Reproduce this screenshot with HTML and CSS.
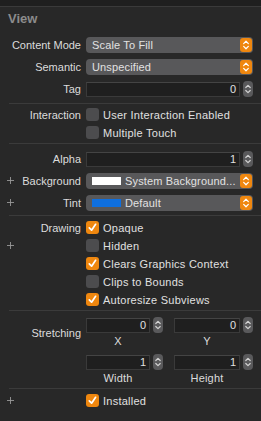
FILE: index.html
```html
<!DOCTYPE html>
<html lang="en">
<head>
  <meta charset="UTF-8">
  <title>Attributes Inspector</title>
  <meta name="viewport" content="width=device-width, initial-scale=1.0">
  <link rel="stylesheet" href="styles.css">
</head>
<body>
  <div class="top-strip"></div>
  <div class="inspector-title">View</div>

  <!-- Content -->
  <div class="section sec-content">
    <div class="row">
      <div class="label">Content Mode</div>
      <div class="popup"><span class="popup-text">Scale To Fill</span><span class="popup-arrow"><svg viewBox="0 0 12 15"><path d="M3.5 6 L6 3.5 L8.5 6 M3.5 9 L6 11.5 L8.5 9" stroke="#fff" stroke-width="1.3" fill="none" stroke-linecap="round" stroke-linejoin="round"/></svg></span></div>
    </div>
    <div class="row">
      <div class="label">Semantic</div>
      <div class="popup"><span class="popup-text">Unspecified</span><span class="popup-arrow"><svg viewBox="0 0 12 15"><path d="M3.5 6 L6 3.5 L8.5 6 M3.5 9 L6 11.5 L8.5 9" stroke="#fff" stroke-width="1.3" fill="none" stroke-linecap="round" stroke-linejoin="round"/></svg></span></div>
    </div>
    <div class="row">
      <div class="label">Tag</div>
      <div class="number-field">
        <div class="field">0</div>
        <div class="stepper"><svg viewBox="0 0 10 16"><path d="M2.8 6.5 L5 4.3 L7.2 6.5 M2.8 9.5 L5 11.7 L7.2 9.5" stroke="#d2d2d2" stroke-width="1.2" fill="none" stroke-linecap="round" stroke-linejoin="round"/></svg></div>
      </div>
    </div>
  </div>
  <div class="divider"></div>

  <!-- Interaction -->
  <div class="section sec-interaction">
    <div class="row check-row">
      <div class="label">Interaction</div>
      <label class="check"><span class="box"></span>User Interaction Enabled</label>
    </div>
    <div class="row check-row">
      <div class="label"></div>
      <label class="check"><span class="box"></span>Multiple Touch</label>
    </div>
  </div>
  <div class="divider"></div>

  <!-- Alpha / colors -->
  <div class="section sec-alpha">
    <div class="row">
      <div class="label">Alpha</div>
      <div class="number-field">
        <div class="field">1</div>
        <div class="stepper"><svg viewBox="0 0 10 16"><path d="M2.8 6.5 L5 4.3 L7.2 6.5 M2.8 9.5 L5 11.7 L7.2 9.5" stroke="#d2d2d2" stroke-width="1.2" fill="none" stroke-linecap="round" stroke-linejoin="round"/></svg></div>
      </div>
    </div>
    <div class="row">
      <div class="label"><span class="plus"><svg viewBox="0 0 8 8"><path d="M4 0 V8 M0 4 H8" stroke="#9a9a9a" stroke-width="1"/></svg></span>Background</div>
      <div class="popup"><span class="swatch swatch-white"></span><span class="popup-text">System Background...</span><span class="popup-arrow"><svg viewBox="0 0 12 15"><path d="M3.5 6 L6 3.5 L8.5 6 M3.5 9 L6 11.5 L8.5 9" stroke="#fff" stroke-width="1.3" fill="none" stroke-linecap="round" stroke-linejoin="round"/></svg></span></div>
    </div>
    <div class="row">
      <div class="label"><span class="plus"><svg viewBox="0 0 8 8"><path d="M4 0 V8 M0 4 H8" stroke="#9a9a9a" stroke-width="1"/></svg></span>Tint</div>
      <div class="popup"><span class="swatch swatch-blue"></span><span class="popup-text">Default</span><span class="popup-arrow"><svg viewBox="0 0 12 15"><path d="M3.5 6 L6 3.5 L8.5 6 M3.5 9 L6 11.5 L8.5 9" stroke="#fff" stroke-width="1.3" fill="none" stroke-linecap="round" stroke-linejoin="round"/></svg></span></div>
    </div>
  </div>
  <div class="divider"></div>

  <!-- Drawing -->
  <div class="section sec-drawing">
    <div class="row check-row">
      <div class="label">Drawing</div>
      <label class="check"><span class="box on"><svg viewBox="0 0 13 13"><path d="M3.3 6.8 L5.6 9.2 L9.6 3.3" stroke="#fff" stroke-width="1.7" fill="none" stroke-linecap="round" stroke-linejoin="round"/></svg></span>Opaque</label>
    </div>
    <div class="row check-row">
      <div class="label"><span class="plus"><svg viewBox="0 0 8 8"><path d="M4 0 V8 M0 4 H8" stroke="#9a9a9a" stroke-width="1"/></svg></span></div>
      <label class="check"><span class="box"></span>Hidden</label>
    </div>
    <div class="row check-row">
      <div class="label"></div>
      <label class="check"><span class="box on"><svg viewBox="0 0 13 13"><path d="M3.3 6.8 L5.6 9.2 L9.6 3.3" stroke="#fff" stroke-width="1.7" fill="none" stroke-linecap="round" stroke-linejoin="round"/></svg></span>Clears Graphics Context</label>
    </div>
    <div class="row check-row">
      <div class="label"></div>
      <label class="check"><span class="box"></span>Clips to Bounds</label>
    </div>
    <div class="row check-row">
      <div class="label"></div>
      <label class="check"><span class="box on"><svg viewBox="0 0 13 13"><path d="M3.3 6.8 L5.6 9.2 L9.6 3.3" stroke="#fff" stroke-width="1.7" fill="none" stroke-linecap="round" stroke-linejoin="round"/></svg></span>Autoresize Subviews</label>
    </div>
  </div>
  <div class="divider"></div>

  <!-- Stretching -->
  <div class="section sec-stretch">
    <div class="row stretch-row">
      <div class="label">Stretching</div>
      <div class="pair">
        <div class="cell">
          <div class="number-field">
            <div class="field">0</div>
            <div class="stepper"><svg viewBox="0 0 10 16"><path d="M2.8 6.5 L5 4.3 L7.2 6.5 M2.8 9.5 L5 11.7 L7.2 9.5" stroke="#d2d2d2" stroke-width="1.2" fill="none" stroke-linecap="round" stroke-linejoin="round"/></svg></div>
          </div>
          <div class="caption">X</div>
        </div>
        <div class="cell">
          <div class="number-field">
            <div class="field">0</div>
            <div class="stepper"><svg viewBox="0 0 10 16"><path d="M2.8 6.5 L5 4.3 L7.2 6.5 M2.8 9.5 L5 11.7 L7.2 9.5" stroke="#d2d2d2" stroke-width="1.2" fill="none" stroke-linecap="round" stroke-linejoin="round"/></svg></div>
          </div>
          <div class="caption">Y</div>
        </div>
      </div>
    </div>
    <div class="row stretch-row">
      <div class="label"></div>
      <div class="pair">
        <div class="cell">
          <div class="number-field">
            <div class="field">1</div>
            <div class="stepper"><svg viewBox="0 0 10 16"><path d="M2.8 6.5 L5 4.3 L7.2 6.5 M2.8 9.5 L5 11.7 L7.2 9.5" stroke="#d2d2d2" stroke-width="1.2" fill="none" stroke-linecap="round" stroke-linejoin="round"/></svg></div>
          </div>
          <div class="caption">Width</div>
        </div>
        <div class="cell">
          <div class="number-field">
            <div class="field">1</div>
            <div class="stepper"><svg viewBox="0 0 10 16"><path d="M2.8 6.5 L5 4.3 L7.2 6.5 M2.8 9.5 L5 11.7 L7.2 9.5" stroke="#d2d2d2" stroke-width="1.2" fill="none" stroke-linecap="round" stroke-linejoin="round"/></svg></div>
          </div>
          <div class="caption">Height</div>
        </div>
      </div>
    </div>
  </div>
  <div class="divider"></div>

  <!-- Installed -->
  <div class="section sec-installed">
    <div class="row check-row">
      <div class="label"><span class="plus"><svg viewBox="0 0 8 8"><path d="M4 0 V8 M0 4 H8" stroke="#9a9a9a" stroke-width="1"/></svg></span></div>
      <label class="check"><span class="box on"><svg viewBox="0 0 13 13"><path d="M3.3 6.8 L5.6 9.2 L9.6 3.3" stroke="#fff" stroke-width="1.7" fill="none" stroke-linecap="round" stroke-linejoin="round"/></svg></span>Installed</label>
    </div>
  </div>
</body>
</html>
```

FILE: styles.css
```css
html, body {
  margin: 0;
  padding: 0;
}
body {
  background: #282828;
  width: 261px;
  height: 421px;
  overflow: hidden;
  font-family: 'Liberation Sans', Arial, sans-serif;
  font-size: 11px;
  color: #dedede;
}
.top-strip {
  height: 6px;
  background: #1f1f1f;
  border-bottom: 1px solid #3a3a3a;
}
.inspector-title {
  height: 24px;
  line-height: 24px;
  padding-left: 8px;
  font-size: 13px;
  font-weight: 700;
  color: #8c8c8c;
}
.section {
  display: flex;
  flex-direction: column;
}
.sec-content { padding: 6px 0 6px; gap: 6px; }
.sec-interaction { padding: 4px 0 4px; gap: 5px; }
.sec-alpha { padding: 7px 0 4px; gap: 6px; }
.sec-drawing { padding: 5px 0 4px; gap: 5px; }
.sec-stretch { padding: 6px 0 3px; gap: 6px; }
.sec-installed { padding: 5px 0 0; }
.divider {
  height: 1px;
  margin-left: 9px;
  background: #3b3b3b;
}
.row {
  display: grid;
  grid-template-columns: 81px 167px;
  column-gap: 5px;
  height: 16px;
  align-items: center;
}
.check-row { height: 13px; }
.stretch-row { height: auto; align-items: start; }
.label {
  display: flex;
  align-items: center;
  justify-content: flex-end;
  white-space: nowrap;
  position: relative;
  height: 100%;
  color: #dcdcdc;
}
.plus {
  position: absolute;
  left: 7px;
  top: 50%;
  width: 7px;
  height: 7px;
  margin-top: -4px;
}
.plus svg { display: block; width: 7px; height: 7px; }

/* popup buttons */
.popup {
  height: 16px;
  background: #58585a;
  border-radius: 4px;
  display: flex;
  align-items: center;
  padding-left: 6px;
  padding-right: 1px;
  box-sizing: border-box;
  color: #e2e2e2;
  letter-spacing: .15px;
}
.popup-text { flex: 1; white-space: nowrap; overflow: hidden; }
.popup-arrow {
  width: 12px;
  height: 14px;
  border-radius: 3px;
  background: #ef870f;
}
.popup-arrow svg { display: block; width: 12px; height: 14px; }
.swatch {
  width: 29px;
  height: 8px;
  margin-right: 4px;
}
.swatch-white { background: #ffffff; }
.swatch-blue { background: #0f6fde; }

/* number fields */
.number-field {
  display: flex;
  align-items: center;
  gap: 3px;
}
.field {
  flex: 1;
  height: 15px;
  box-sizing: border-box;
  background: #1f1f1f;
  border: 1px solid #3a3a3a;
  border-top-color: #444;
  text-align: right;
  line-height: 13px;
  padding-right: 3px;
  color: #e0e0e0;
}
.stepper {
  width: 10px;
  height: 16px;
  border-radius: 4px;
  background: #59595b;
}
.stepper svg { display: block; width: 10px; height: 16px; }

/* stretching */
.pair {
  display: grid;
  grid-template-columns: 77px 79px;
  column-gap: 11px;
}
.cell { display: flex; flex-direction: column; }
.caption {
  height: 15px;
  line-height: 17px;
  text-align: center;
  padding-right: 13px;
  color: #dcdcdc;
  letter-spacing: .2px;
}

/* checkboxes */
.check {
  display: flex;
  align-items: center;
  gap: 4px;
  white-space: nowrap;
  color: #e0e0e0;
  letter-spacing: .25px;
}
.box {
  width: 13px;
  height: 13px;
  border-radius: 3px;
  background: #4c4c4e;
  box-sizing: border-box;
}
.box.on { background: #ef870f; }
.box svg { display: block; width: 13px; height: 13px; }
```
